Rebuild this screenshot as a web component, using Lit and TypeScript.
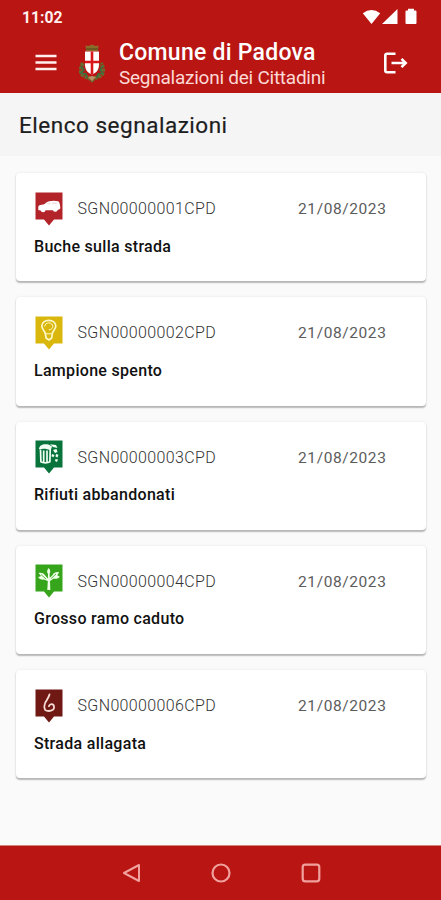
import { LitElement, html, css, svg } from "lit";
import { customElement, property } from "lit/decorators.js";

const glyphs: Record<string, unknown> = {
  car: svg`<path fill="#fff" d="M3.300 18v-3.300q.2-1.300 2.200-1.700l3.800-.8q2.400-2.600 4.800-3 5-.7 9 0l1 .9q1.200 2.400 1.200 6.400l-1.600 1.200h-.9a2.600 2.600 0 0 1-4.900.5h-7.300a2.600 2.600 0 0 1-5 .2z"/><path d="M11 12.300q1.700-1.600 3.500-1.800h1v1.700zM17 10.400h4.500l.6 1.500-5.100.2z" fill="#b3242a" opacity=".15"/>`,
  lamp: svg`<g fill="none" stroke="#fff8c8" stroke-linejoin="round"><path stroke-width="1.700" d="M10.300 17.500c-.5-2.800-3.500-4.400-3.500-7.500 0-3.400 3.200-5.600 7-5.600s7 2.200 7 5.600c0 3.100-3 4.700-3.500 7.500l-.6 4.500-2.700 2-2.900-2z"/><path stroke-width="1" d="M9.800 10.500c0-2.200 1.700-3.600 4-3.600s4 1.400 4 3.600c0 1.700-1.600 3.300-4 3.300M10.500 17.800h6.500"/></g>`,
  waste: svg`<path fill="none" stroke="#f2fff5" stroke-width="1.700" stroke-linejoin="round" d="M5.500 9.500l.4 12.300c2 1.300 7 1.300 9 0l.3-12.300M8.700 10.500v11.700M12 10.500v11.700"/><path fill="#f2fff5" d="M4 9.200c0-3.700 4.500-5.900 10-4.400l3 1.700-1.200 3.700c-3.500-1.700-8-2-11.800-1zM15 4.200l6 .7 1.500 3-4.500-.8zM18 10l3.500-1 1 3-2.500 1zM21 14l2.500.8-1 2.700-2-1zM17 14l2.500 1-1 2.300-2-1zM20.500 19l2.500.5-1 2.500-2-1z"/>`,
  branch: svg`<path fill="#efffe8" d="M12.300 26l.5-9-4-1.400c-2.500.2-4.600-.6-5.800-2.300l3-1.300-2.500-3c3-.5 5.200.300 6.300 2.100l3 3.300.2-4.400c-1.500-2-1-4 .7-6 1.800 2 2 4 .9 6l.2 3.700 2.800-2.800c1.300-2.300 3.500-3.200 6.500-2.700l-1.800 3 2.500 1.500c-1.500 2-3.700 2.500-6 1.800l-3.800 2.500.3 9z"/><path d="M6 10.500l5 4.500M21 10l-5 4.600" stroke="#36a51c" stroke-width=".8"/>`,
  flood: svg`<path fill="none" stroke="#f7dcd6" stroke-width="1.800" stroke-linecap="round" stroke-linejoin="round" d="M14.500 5.500c-.8 3.500-3.600 6.200-4.600 9-1 2.600-.8 4.500.2 6.300 1.600 1.600 5.500 1.600 7.800 0 1.700-1.400 1.500-4.400-.2-5.400-1.700-.7-3.300.2-3.800 1.800"/>`,
};

@customElement("report-card")
class ReportCard extends LitElement {
  @property() code = "";
  @property() date = "";
  @property() label = "";
  @property() kind = "";
  @property() color = "";

  static styles = css`
    :host { display: block; box-sizing: border-box; height: 108.300px; padding: 18.500px 40px 0 18.500px; background: #fff; border-radius: 4px;
      box-shadow: 0 1.500px 1.500px rgba(0,0,0,.26), 0 0 3px rgba(0,0,0,.07); }
    .top { display: flex; align-items: flex-start; height: 34px; }
    .pin { width: 28px; height: 34px; flex: none; }
    .code, .date { font-size: 16px; line-height: 20px; margin-top: 7.700px; white-space: nowrap; }
    .code { margin-left: 15px; font-weight: 300; color: #333; letter-spacing: .36px; }
    .date { margin-left: auto; color: #5c5c5c; letter-spacing: .6px; margin-right: -.5px; font-size: 15.500px; font-weight: 400; }
    .label { margin-top: 11px; font-size: 16px; line-height: 20px; font-weight: 500; color: #111; letter-spacing: .3px; margin-left: -.5px; white-space: nowrap; }
  `;
  render() {
    return html`<div class="top">
        <svg class="pin" viewBox="0 0 28 34"><path fill=${this.color} d="M.5.500h27v27h-8.500L14 33.500 9 27.500H.5z"/>${glyphs[this.kind]}</svg>
        <span class="code">${this.code}</span><span class="date">${this.date}</span>
      </div>
      <div class="label">${this.label}</div>`;
  }
}

const reports = [
  ["SGN00000001CPD", "Buche sulla strada", "car", "#b3242a"],
  ["SGN00000002CPD", "Lampione spento", "lamp", "#d9b70c"],
  ["SGN00000003CPD", "Rifiuti abbandonati", "waste", "#08733a"],
  ["SGN00000004CPD", "Grosso ramo caduto", "branch", "#36a51c"],
  ["SGN00000006CPD", "Strada allagata", "flood", "#701814"],
];

@customElement("app-root")
class AppRoot extends LitElement {
  static styles = css`
    :host { display: flex; flex-direction: column; width: 441px; height: 900px; overflow: hidden; background: #fafafa; font-family: Roboto, sans-serif; }
    header { height: 92.500px; flex: none; background: #b91513; color: #fff; }
    .status { height: 34px; display: flex; align-items: center; padding: 0 23px 0 22px; box-sizing: border-box; }
    .time { font-size: 15.700px; font-weight: 700; flex: 1; color: #fff0ee; }
    .signals { width: 56px; height: 18px; }
    .bar { display: flex; align-items: center; height: 58px; padding: 0 33px 0 35px; }
    .menu { width: 22px; height: 18px; }
    .crest { width: 28px; height: 40px; margin: 0 12px 0 21px; }
    .names { flex: 1; margin-left: 1px; padding-top: 4px; white-space: nowrap; }
    .city { font-size: 23px; line-height: 26px; font-weight: 500; letter-spacing: .25px; }
    .sub { font-size: 19px; line-height: 24px; font-weight: 400; color: #fbd9d5; letter-spacing: -.25px; }
    .exit { width: 25px; height: 24px; }
    .heading { height: 63px; flex: none; background: #f5f5f5; box-sizing: border-box; padding: 17px 19px 0; font-size: 22.500px; line-height: 30px; color: #1d1d1d; letter-spacing: .52px; -webkit-text-stroke: .2px #1d1d1d; white-space: nowrap; }
    main { flex: 1; display: flex; flex-direction: column; gap: 16px; padding: 17.500px 15px 0 16px; }
    nav { height: 55px; flex: none; background: #b91513; border-top: 1px solid #d38480; box-sizing: border-box; display: flex; justify-content: center; align-items: center; gap: 70px; }
    nav svg { width: 20px; height: 20px; }
  `;
  render() {
    return html`
      <header>
        <div class="status"><span class="time">11:02</span>
          <svg class="signals" viewBox="0 0 56 18" fill="#fff"><path d="M.8 5.200Q9.500-1.200 18.200 5.200L9.500 16z"/><path d="M20 16L35.500 1v15z"/><path d="M46 2.500V.800h6v1.700h1.500q1 0 1 1V15q0 1-1 1h-9q-1 0-1-1V3.500q0-1 1-1z"/></svg>
        </div>
        <div class="bar">
          <svg class="menu" viewBox="0 0 22 18" fill="#fff0ee"><path d="M.5 .8h21v2.500H.5zM.5 7.300h21v2.500H.5zM.5 13.800h21v2.500H.5z"/></svg>
          <svg class="crest" viewBox="0 0 28 40">
            <path d="M5 20C2 26 2 31 6 33c4 2 6 2 8 4 2-2 4-2 8-4 4-2 4-7 1-13" fill="none" stroke="#6b6a2d" stroke-width="4" stroke-dasharray="3 .8"/>
            <path d="M3 23l3 4-3 3 5 1 1 4M25 23l-3 4 3 3-5 1-1 4" fill="none" stroke="#367044" stroke-width="1.500"/>
            <path d="M8 8L7.500 2.500l3 .5 3.500-1.500 3.500 1.500 3-.5L20 8z" fill="#8a6c2a"/><path d="M8 6h12" stroke="#51451e"/>
            <path d="M7 8.500h14V22q0 7-7 9.500-7-2.500-7-9.500z" fill="#fff"/>
            <path d="M12.700 8.500h2.600v9.200H21v2.600h-5.700v10.700L14 31.500l-1.300-.5V20.300H7v-2.600h5.700z" fill="#d9161b"/>
            <path d="M10 34l4-1 4 1-4 4z" fill="#b7936a"/>
          </svg>
          <div class="names"><div class="city">Comune di Padova</div><div class="sub">Segnalazioni dei Cittadini</div></div>
          <svg class="exit" viewBox="0 0 25 24" fill="none" stroke="#fff" stroke-width="2.600"><path d="M12.500 2.800H4Q2.300 2.800 2.300 4.500v15q0 1.700 1.700 1.700h8.500M8.500 12H22"/><path d="M18.500 7.800l4.200 4.200-4.200 4.200"/></svg>
        </div>
      </header>
      <div class="heading">Elenco segnalazioni</div>
      <main>${reports.map(([code, label, kind, color]) => html`<report-card .code=${code} .label=${label} .kind=${kind} .color=${color} date="21/08/2023"></report-card>`)}</main>
      <nav>
        <svg viewBox="0 0 20 20" fill="none" stroke="#f1a19d" stroke-width="2" stroke-linejoin="round"><path d="M18 2v16L3 10z"/></svg>
        <svg viewBox="0 0 20 20" fill="none" stroke="#f1a19d" stroke-width="2.200"><circle cx="10" cy="10" r="8.500"/></svg>
        <svg viewBox="0 0 20 20" fill="none" stroke="#f1a19d" stroke-width="2.200"><rect x="1.700" y="1.700" width="16.600" height="16.600" rx="2.500"/></svg>
      </nav>`;
  }
}
